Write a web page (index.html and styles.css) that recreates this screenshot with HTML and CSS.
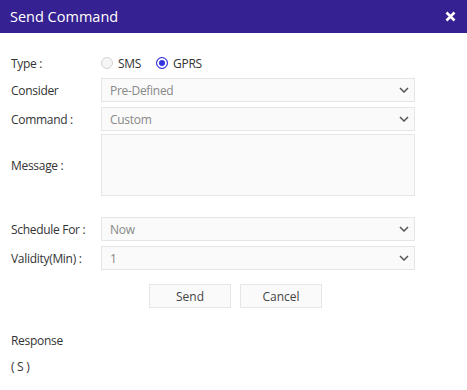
FILE: index.html
```html
<!DOCTYPE html>
<html lang="en">
<head>
    <meta charset="UTF-8">
    <meta name="viewport" content="width=device-width, initial-scale=1.0">
    <title>Send Command</title>
    <link rel="stylesheet" href="styles.css">
</head>
<body>

<header class="modal-header">
    <h1>Send Command</h1>
    <svg class="close-btn" width="11" height="11" viewBox="0 0 11 11"><path d="M1.5 1.5l8 8M9.5 1.5l-8 8" stroke="#fff" stroke-width="2.6"/></svg>
</header>

<div class="form">
    <div class="row row-type">
        <label>Type :</label>
        <div class="radios">
            <span class="radio"><span class="dot"></span>SMS</span>
            <span class="radio checked"><span class="dot"></span>GPRS</span>
        </div>
    </div>
    <div class="row">
        <label>Consider</label>
        <div class="select">
            <span>Pre-Defined</span>
            <svg width="10" height="6" viewBox="0 0 10 6"><path d="M1 1l4 4 4-4" fill="none" stroke="#555" stroke-width="1.5"/></svg>
        </div>
    </div>
    <div class="row row-command">
        <label>Command :</label>
        <div class="select">
            <span>Custom</span>
            <svg width="10" height="6" viewBox="0 0 10 6"><path d="M1 1l4 4 4-4" fill="none" stroke="#555" stroke-width="1.5"/></svg>
        </div>
    </div>
    <div class="row row-message">
        <label>Message :</label>
        <textarea class="message"></textarea>
    </div>
    <div class="row">
        <label>Schedule For :</label>
        <div class="select">
            <span>Now</span>
            <svg width="10" height="6" viewBox="0 0 10 6"><path d="M1 1l4 4 4-4" fill="none" stroke="#555" stroke-width="1.5"/></svg>
        </div>
    </div>
    <div class="row">
        <label>Validity(Min) :</label>
        <div class="select">
            <span>1</span>
            <svg width="10" height="6" viewBox="0 0 10 6"><path d="M1 1l4 4 4-4" fill="none" stroke="#555" stroke-width="1.5"/></svg>
        </div>
    </div>
    <div class="actions">
        <button class="btn">Send</button>
        <button class="btn">Cancel</button>
    </div>
    <div class="response">
        <p>Response</p>
        <p>( S )</p>
    </div>
</div>

</body>
</html>
```

FILE: styles.css
```css
body {
    font-family: "Open Sans", sans-serif;
    margin: 0;
    padding: 0;
    background-color: #fff;
    color: #333;
    font-size: 12px;
    letter-spacing: -0.3px;
}
.modal-header {
    background-color: #352191;
    color: white;
    height: 33px;
    display: flex;
    align-items: center;
    justify-content: space-between;
    padding: 0 11px 0 10px;
}
.modal-header h1 {
    margin: 0;
    font-size: 14.5px;
    font-weight: normal;
    letter-spacing: 0;
}
.form {
    padding: 20px 52px 0 11px;
}
.row {
    display: flex;
    align-items: center;
    margin-bottom: 5px;
}
.row label {
    width: 90px;
    flex-shrink: 0;
}
.row-type {
    height: 20px;
}
.row-command {
    margin-bottom: 3px;
}
.radios {
    display: flex;
    gap: 15px;
}
.radio {
    display: flex;
    align-items: center;
    gap: 5px;
}
.radio .dot {
    box-sizing: border-box;
    width: 12px;
    height: 12px;
    border: 1px solid #d4d4d4;
    border-radius: 50%;
    background: #f5f5f5;
}
.radio.checked .dot {
    border: 1.5px solid #3434e0;
    background: #3434e0;
    box-shadow: inset 0 0 0 2px #fff;
}
.select {
    box-sizing: border-box;
    flex: 1;
    height: 24px;
    border: 1px solid #e6e6e6;
    background-color: #fafafa;
    display: flex;
    align-items: center;
    justify-content: space-between;
    padding: 0 5px 0 8px;
    color: #888;
}
.row-message {
    margin-bottom: 21px;
}
.message {
    box-sizing: border-box;
    flex: 1;
    height: 62px;
    border: 1px solid #e6e6e6;
    background-color: #fafafa;
    resize: none;
    margin: 0;
    padding: 0;
}
.actions {
    display: flex;
    justify-content: center;
    gap: 9px;
    margin-top: 14px;
    padding-left: 45px;
}
.btn {
    box-sizing: border-box;
    width: 82px;
    height: 24px;
    border: 1px solid #e6e6e6;
    background-color: #fafafa;
    font-family: "Open Sans", sans-serif;
    font-size: 12px;
    color: #444;
    cursor: pointer;
}
.response {
    margin-top: 24px;
}
.response p {
    margin: 0 0 9px;
    line-height: 17px;
}
```
